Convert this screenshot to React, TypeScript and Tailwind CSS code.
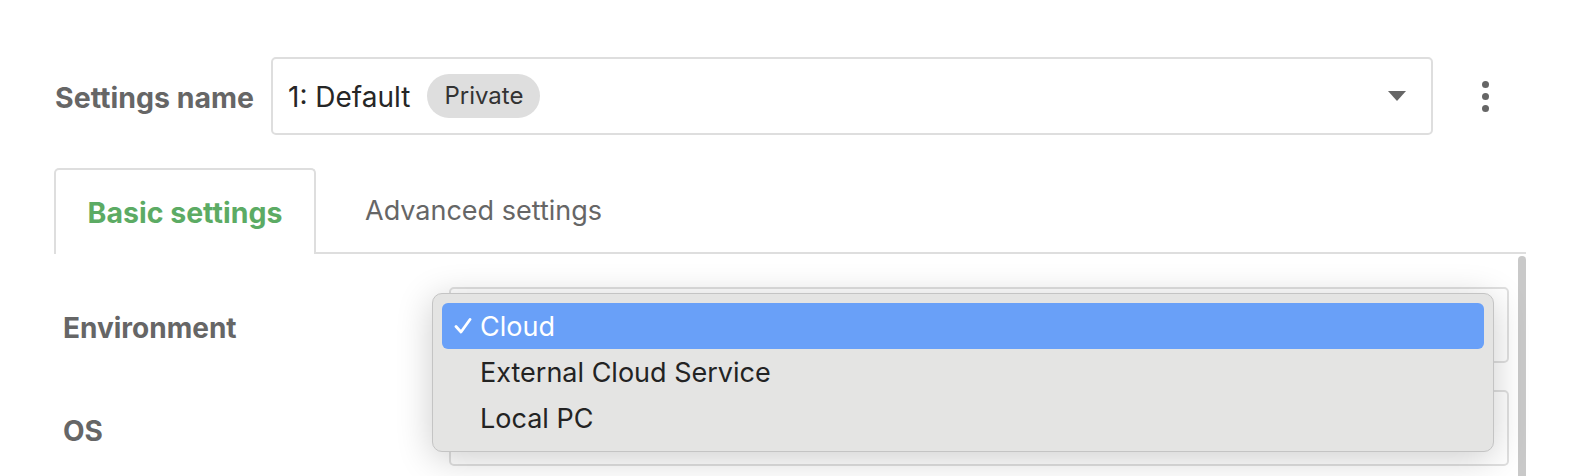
import React from "react";

const font = { fontFamily: "Inter, 'Noto Sans', sans-serif" };

const Check = () => (
  <svg width="18" height="16" viewBox="0 0 18 16" className="ml-[12px] mr-[8px]">
    <path d="M2 8.5 L7 14 L16 1.5" fill="none" stroke="white" strokeWidth="2.8" strokeLinecap="round" strokeLinejoin="round" />
  </svg>
);

const MenuItem = ({ label, selected }: { label: string; selected?: boolean }) => (
  <div
    className={
      "h-[46px] flex items-center rounded-[6px] " +
      (selected ? "bg-[#69a0f8] text-white" : "text-[#232323] pl-[38px]")
    }
  >
    {selected && <Check />}
    <span className="text-[27px] leading-none">{label}</span>
  </div>
);

const FieldRow = ({ label }: { label: string }) => (
  <div className="flex items-center">
    <div className="w-[386px] pt-[6px] text-[28px] font-bold text-[#666]">{label}</div>
    <div className="w-[1060px] h-[76px] border-2 border-[#e0e0e0] rounded-[5px] bg-white" />
  </div>
);

export default function App() {
  return (
    <div className="relative w-[1584px] h-[476px] bg-white overflow-hidden" style={font}>
      {/* Settings name row */}
      <div className="flex items-center pl-[55px] pt-[57px]">
        <div className="w-[216px] pt-[4px] text-[28.5px] font-bold text-[#666]">Settings name</div>
        <div className="w-[1162px] h-[78px] border-2 border-[#dedede] rounded-[5px] flex items-center pl-[15px] pr-[25px]">
          <span className="pt-[2px] text-[28px] text-[#262626]">1: Default</span>
          <span className="ml-[17px] h-[44px] px-[17px] rounded-full bg-[#dedede] flex items-center text-[24px] text-[#333]">
            Private
          </span>
          <div className="flex-1" />
          <svg width="18" height="10" viewBox="0 0 18 10">
            <path d="M0 0 H18 L9 10 Z" fill="#666" />
          </svg>
        </div>
        <div className="ml-[49px] flex flex-col gap-[5px]">
          <span className="w-[7px] h-[7px] rounded-full bg-[#666]" />
          <span className="w-[7px] h-[7px] rounded-full bg-[#666]" />
          <span className="w-[7px] h-[7px] rounded-full bg-[#666]" />
        </div>
      </div>

      {/* Tabs */}
      <div className="ml-[54px] mt-[33px] w-[1472px] flex items-end h-[86px]">
        <div className="w-[262px] h-full pt-[2px] border-2 border-b-0 border-[#dedede] rounded-t-[5px] flex items-center justify-center text-[28.5px] font-bold text-[#5cab64]">
          Basic settings
        </div>
        <div className="flex-1 h-full pt-[2px] border-b-2 border-[#dedede] flex items-center pl-[49px] text-[27px] text-[#666]">
          Advanced settings
        </div>
      </div>

      {/* Tab content */}
      <div className="ml-[54px] w-[1472px] flex">
        <div className="flex-1 pl-[9px] pt-[33px] flex flex-col gap-[27px]">
          <FieldRow label="Environment" />
          <FieldRow label="OS" />
        </div>
        <div className="w-[8px] h-[230px] mt-[2px] rounded-full bg-[#c9c9c9]" />
      </div>

      {/* Open select menu */}
      <div className="absolute left-[432px] top-[293px] w-[1062px] h-[159px] p-[9px] rounded-[10px] border border-[#c4c4c4] bg-[#e4e4e3] shadow-[0_6px_36px_rgba(0,0,0,0.2)]">
        <MenuItem label="Cloud" selected />
        <MenuItem label="External Cloud Service" />
        <MenuItem label="Local PC" />
      </div>
    </div>
  );
}
